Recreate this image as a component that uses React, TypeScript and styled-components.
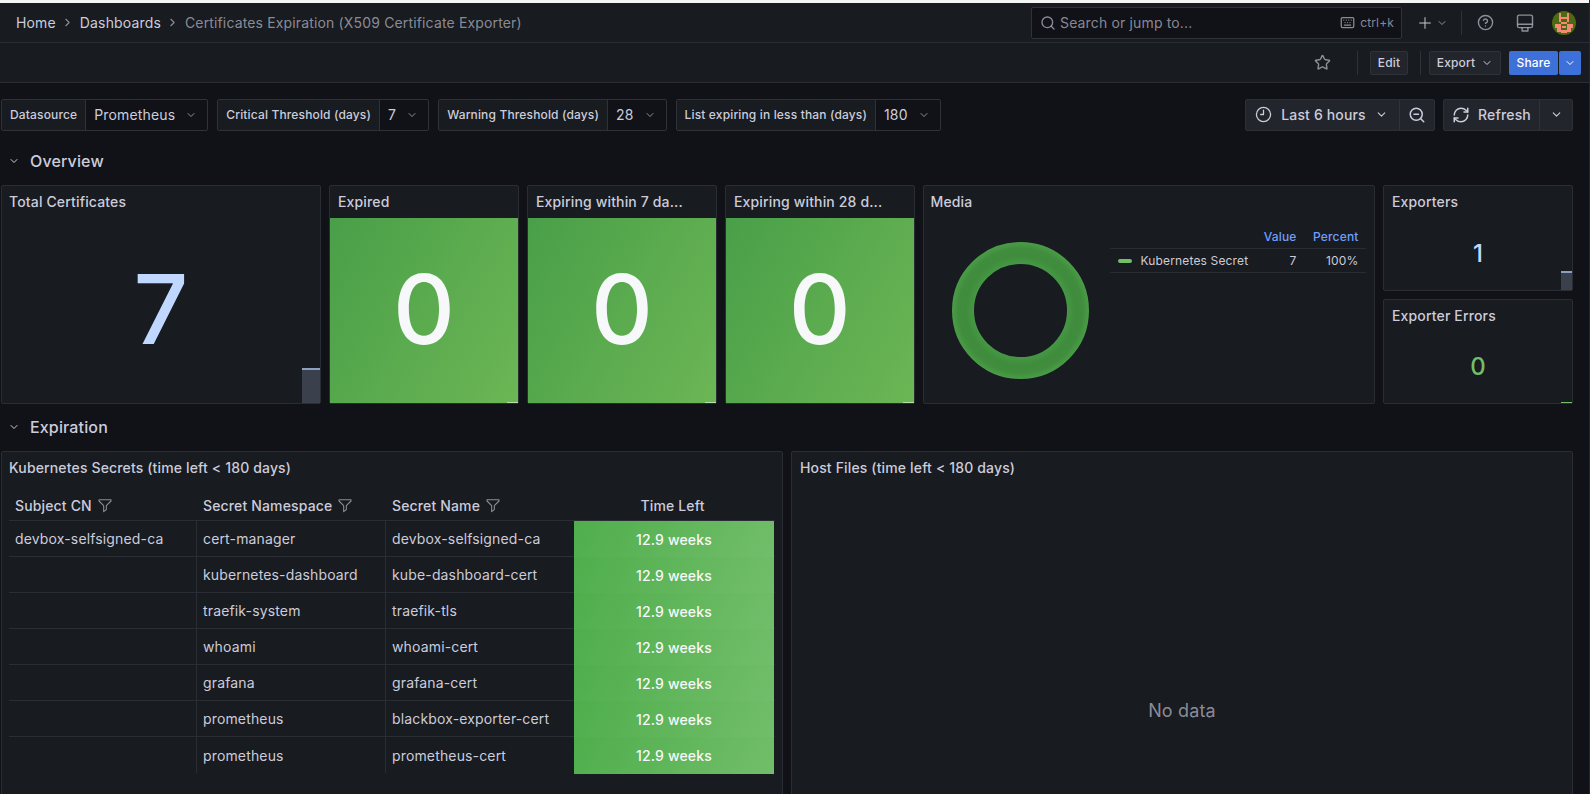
import React from 'react';
import styled, { createGlobalStyle } from 'styled-components';
import { ChevronDown, ChevronRight, CircleHelp, Keyboard, Plus, RefreshCw, Search, Star, ZoomOut } from 'lucide-react';

const GlobalStyle = createGlobalStyle`
  html, body {
    margin: 0;
    padding: 0;
    background: #111217;
  }
  * {
    box-sizing: border-box;
  }
`;

// Page frame
const Page = styled.div`
  width: 1590px;
  height: 794px;
  overflow: hidden;
  background: #111217;
  color: #ccccdc;
  font-family: Inter, 'Noto Sans', sans-serif;
  font-size: 14px;
  letter-spacing: 0.01071em;
  border-right: 1px solid #24262b;
`;

const WindowEdge = styled.div`
  height: 3px;
  background: #f4f5f5;
`;

// Top bar
const TopBar = styled.header`
  display: flex;
  align-items: center;
  height: 40px;
  padding: 0 13px 0 16px;
  background: #181b1f;
  border-bottom: 1px solid #2a2d33;
`;

const Breadcrumbs = styled.nav`
  display: flex;
  flex: 1;
  align-items: center;
`;

const Crumb = styled.span<{ $current?: boolean }>`
  color: ${(p) => (p.$current ? 'rgba(204, 204, 220, 0.65)' : '#ccccdc')};
`;

const CrumbSeparator = styled.span`
  display: flex;
  width: 24px;
  justify-content: center;
  color: rgba(204, 204, 220, 0.65);
`;

const SearchBox = styled.div`
  display: flex;
  align-items: center;
  width: 371px;
  height: 32px;
  padding: 0 7px 0 8px;
  background: #111217;
  border: 1px solid #2f3238;
  border-radius: 2px;
  color: rgba(204, 204, 220, 0.65);
`;

const SearchText = styled.span`
  flex: 1;
  margin-left: 4px;
`;

const ShortcutText = styled.span`
  margin-left: 5px;
  font-size: 12px;
`;

const AddMenu = styled.div`
  display: flex;
  align-items: center;
  gap: 2px;
  margin-left: 14px;
  color: rgba(204, 204, 220, 0.65);
`;

const BarDivider = styled.span<{ $left: number; $right: number }>`
  width: 1px;
  height: 24px;
  margin: 0 ${(p) => p.$right}px 0 ${(p) => p.$left}px;
  background: #2f3238;
`;

const BarIcon = styled.span<{ $gap: number }>`
  display: flex;
  margin-right: ${(p) => p.$gap}px;
  color: rgba(204, 204, 220, 0.65);
`;

const Avatar = styled.svg`
  display: block;
  width: 24px;
  height: 24px;
`;

// Dashboard toolbar
const Toolbar = styled.div`
  display: flex;
  align-items: center;
  justify-content: flex-end;
  height: 40px;
  padding-right: 8px;
  background: #181b1f;
  border-bottom: 1px solid #2a2d33;
`;

const ToolbarButton = styled.button<{ $width: number }>`
  display: flex;
  align-items: center;
  justify-content: center;
  gap: 6px;
  width: ${(p) => p.$width}px;
  height: 24px;
  padding: 0;
  background: #22252b;
  border: 1px solid #2f3238;
  border-radius: 2px;
  color: #ccccdc;
  font: inherit;
  font-size: 12px;
  font-weight: 500;
  letter-spacing: inherit;
`;

const ShareButton = styled.button<{ $width: number }>`
  display: flex;
  align-items: center;
  justify-content: center;
  width: ${(p) => p.$width}px;
  height: 24px;
  margin-left: ${(p) => (p.$width > 30 ? 8 : 1)}px;
  padding: 0;
  background: #3d71d9;
  border: none;
  border-radius: 2px;
  color: #fff;
  font: inherit;
  font-size: 12px;
  font-weight: 500;
  letter-spacing: inherit;
`;

// Variables row
const ControlsRow = styled.div`
  display: flex;
  justify-content: space-between;
  margin: 16px 16px 16px 1px;
`;

const VariableGroup = styled.div`
  display: flex;
  gap: 9px;
`;

const Variable = styled.div`
  display: flex;
  height: 32px;
  border: 1px solid #2f3238;
  border-radius: 2px;
`;

const VariableLabel = styled.label`
  display: flex;
  align-items: center;
  padding: 0 8px 1px;
  background: #181b1f;
  border-right: 1px solid #2f3238;
  font-size: 12px;
  font-weight: 500;
`;

const VariableValue = styled.div`
  display: flex;
  align-items: center;
  gap: 10px;
  padding: 0 10px 1px 8px;
  color: #ccccdc;
`;

const MutedChevron = styled.span`
  display: flex;
  color: rgba(204, 204, 220, 0.65);
`;

const TimeControls = styled.div`
  display: flex;
  gap: 8px;
`;

const ButtonGroup = styled.div`
  display: flex;
  height: 32px;
  background: #22252b;
  border: 1px solid #2c2f35;
  border-radius: 2px;
`;

const GroupItem = styled.div<{ $width: number; $gap?: number; $endPad?: number }>`
  display: flex;
  align-items: center;
  justify-content: center;
  gap: ${(p) => p.$gap ?? 8}px;
  width: ${(p) => p.$width}px;
  padding: 0 ${(p) => p.$endPad ?? 0}px 1px 0;
  font-weight: 500;
  & + & {
    border-left: 1px solid #2f3238;
  }
`;

// Rows and panels
const SectionHeader = styled.h2`
  display: flex;
  align-items: center;
  gap: 10px;
  height: 28px;
  margin: 0 0 10px;
  padding-left: 8px;
  font-size: 16px;
  font-weight: 500;
  letter-spacing: inherit;
`;

const OverviewGrid = styled.section`
  display: grid;
  grid-template-columns: 320px 190px 190px 189.5px 452.5px 190px;
  grid-template-rows: 105.5px 105.5px;
  gap: 8px;
  margin: 0 0 9px 1px;
`;

const ExpirationGrid = styled.section`
  display: grid;
  grid-template-columns: 782px 782px;
  gap: 8px;
  height: 486px;
  margin-left: 1px;
`;

const Panel = styled.article<{ $tall?: boolean }>`
  display: flex;
  flex-direction: column;
  grid-row: ${(p) => (p.$tall ? 'span 2' : 'auto')};
  min-width: 0;
  background: #181b1f;
  border: 1px solid #2a2d33;
  border-radius: 2px;
`;

const PanelTitle = styled.h3<{ $tight?: boolean }>`
  flex: none;
  height: 32px;
  margin: 0;
  padding: 0 ${(p) => (p.$tight ? 7 : 8)}px;
  overflow: hidden;
  font-size: 14px;
  font-weight: 500;
  letter-spacing: inherit;
  line-height: 32px;
  white-space: nowrap;
`;

const StatBody = styled.div<{ $filled?: boolean }>`
  position: relative;
  display: flex;
  flex: 1;
  align-items: center;
  justify-content: center;
  background: ${(p) => (p.$filled ? 'linear-gradient(120deg, #499f48, #6cb655)' : 'transparent')};
`;

const StatValue = styled.span<{ $size: number; $color: string }>`
  margin-bottom: ${(p) => (p.$size > 50 ? 4 : 0)}px;
  color: ${(p) => p.$color};
  font-size: ${(p) => p.$size}px;
  font-weight: 500;
  letter-spacing: 0;
  line-height: 1;
`;

const Spark = styled.span<{ $width: number; $height: number; $tone: 'blue' | 'green' | 'light' }>`
  position: absolute;
  right: 0;
  bottom: 0;
  width: ${(p) => p.$width}px;
  height: ${(p) => p.$height}px;
  background: ${(p) =>
    p.$tone === 'blue' ? '#3b414c' : p.$tone === 'green' ? '#73bf69' : '#b5dfae'};
  border-top: ${(p) => (p.$tone === 'blue' ? '2px solid #8c9fc0' : 'none')};
`;

const MediaBody = styled.div`
  display: flex;
  flex: 1;
  align-items: center;
`;

const Donut = styled.svg`
  flex: none;
  width: 137px;
  height: 137px;
  margin-left: 28px;
`;

const Legend = styled.div`
  align-self: flex-start;
  width: 256px;
  margin-left: 21px;
  font-size: 12px;
`;

const LegendRow = styled.div<{ $head?: boolean }>`
  display: grid;
  grid-template-columns: minmax(0, 1fr) 60px 62px;
  align-items: center;
  height: ${(p) => (p.$head ? 31 : 24)}px;
  padding: ${(p) => (p.$head ? '6px 7px 0 8px' : '0 7px 0 8px')};
  border-bottom: 1px solid #2a2d33;
  color: ${(p) => (p.$head ? '#6e9fff' : '#ccccdc')};
  font-weight: ${(p) => (p.$head ? 500 : 400)};
`;

const LegendName = styled.span`
  display: flex;
  align-items: center;
  gap: 9px;
  white-space: nowrap;
`;

const LegendMarker = styled.i`
  flex: none;
  width: 14px;
  height: 4px;
  background: #73bf69;
  border-radius: 2px;
`;

const RightCell = styled.span`
  text-align: right;
`;

// Table
const Table = styled.div`
  margin: 6px 7px 0;
`;

const TableRow = styled.div<{ $head?: boolean; $last?: boolean }>`
  display: grid;
  grid-template-columns: 188px 189px 188px 200px;
  height: ${(p) => (p.$head ? 31 : 36)}px;
  border-bottom: ${(p) => (p.$last ? 'none' : '1px solid #2a2d33')};
`;

const HeadCell = styled.div<{ $center?: boolean }>`
  display: flex;
  align-items: center;
  justify-content: ${(p) => (p.$center ? 'center' : 'flex-start')};
  gap: 5px;
  padding: ${(p) => (p.$center ? '0 9px 0 6px' : '0 6px')};
  font-weight: 500;
`;

const Cell = styled.div<{ $divider?: boolean }>`
  display: flex;
  align-items: center;
  padding: 0 6px;
  border-right: ${(p) => (p.$divider ? '1px solid #2a2d33' : 'none')};
`;

const ValueCell = styled.div`
  display: flex;
  align-items: center;
  justify-content: center;
  margin-bottom: -1px;
  background: linear-gradient(120deg, #4fae4c, #72be6a);
  color: #f7f8fa;
  font-weight: 500;
`;

const FilterIcon = styled.svg`
  width: 16px;
  height: 16px;
  color: rgba(204, 204, 220, 0.65);
`;

const NoData = styled.div`
  display: flex;
  flex: 1;
  align-items: center;
  justify-content: center;
  color: rgba(204, 204, 220, 0.65);
  font-size: 18px;
`;

const statusPanels = ['Expired', 'Expiring within 7 da...', 'Expiring within 28 d...'];

const secrets = [
  { cn: 'devbox-selfsigned-ca', namespace: 'cert-manager', name: 'devbox-selfsigned-ca' },
  { cn: '', namespace: 'kubernetes-dashboard', name: 'kube-dashboard-cert' },
  { cn: '', namespace: 'traefik-system', name: 'traefik-tls' },
  { cn: '', namespace: 'whoami', name: 'whoami-cert' },
  { cn: '', namespace: 'grafana', name: 'grafana-cert' },
  { cn: '', namespace: 'prometheus', name: 'blackbox-exporter-cert' },
  { cn: '', namespace: 'prometheus', name: 'prometheus-cert' },
];

const variables = [
  { label: 'Datasource', value: 'Prometheus' },
  { label: 'Critical Threshold (days)', value: '7' },
  { label: 'Warning Threshold (days)', value: '28' },
  { label: 'List expiring in less than (days)', value: '180' },
];

const Funnel = () => (
  <FilterIcon viewBox="0 0 24 24" fill="none" stroke="currentColor" strokeWidth="1.6" strokeLinejoin="round">
    <path d="M3 4h18v2l-7 7v6l-4 3v-9L3 6z" />
  </FilterIcon>
);

const MonitorIcon = () => (
  <svg width="20" height="20" viewBox="0 0 24 24" fill="none" stroke="currentColor" strokeWidth="1.7" strokeLinejoin="round">
    <rect x="3" y="2.5" width="18" height="15" rx="2" />
    <path d="M3 13.5h18M8.5 17.5v4h7v-4" />
  </svg>
);

const ClockNine = () => (
  <svg width="17" height="17" viewBox="0 0 24 24" fill="none" stroke="currentColor" strokeWidth="1.8" strokeLinecap="round" strokeLinejoin="round">
    <circle cx="12" cy="12" r="10" />
    <path d="M12 6v6H8" />
  </svg>
);

const IdentIcon = () => (
  <Avatar viewBox="0 0 24 24">
    <circle cx="12" cy="12" r="12" fill="#4d6a12" />
    <g fill="#f58a76">
      <rect x="7" y="2" width="2" height="9" />
      <rect x="15" y="2" width="2" height="9" />
      <rect x="7" y="6" width="10" height="2" />
      <rect x="9" y="11" width="6" height="2" />
      <rect x="3" y="13" width="6" height="4" />
      <rect x="15" y="13" width="6" height="4" />
      <rect x="10" y="15" width="4" height="2" />
      <rect x="5" y="17" width="4" height="4" />
      <rect x="15" y="17" width="4" height="4" />
      <rect x="9" y="19" width="6" height="3" />
    </g>
  </Avatar>
);

const App = () => (
  <Page>
    <GlobalStyle />
    <WindowEdge />
    <TopBar>
      <Breadcrumbs>
        <Crumb>Home</Crumb>
        <CrumbSeparator>
          <ChevronRight size={13} />
        </CrumbSeparator>
        <Crumb>Dashboards</Crumb>
        <CrumbSeparator>
          <ChevronRight size={13} />
        </CrumbSeparator>
        <Crumb $current>Certificates Expiration (X509 Certificate Exporter)</Crumb>
      </Breadcrumbs>
      <SearchBox>
        <Search size={16} />
        <SearchText>Search or jump to...</SearchText>
        <Keyboard size={15} />
        <ShortcutText>ctrl+k</ShortcutText>
      </SearchBox>
      <AddMenu>
        <Plus size={18} />
        <ChevronDown size={12} />
      </AddMenu>
      <BarDivider $left={13} $right={15} />
      <BarIcon $gap={21}>
        <CircleHelp size={17} />
      </BarIcon>
      <BarIcon $gap={17}>
        <MonitorIcon />
      </BarIcon>
      <IdentIcon />
    </TopBar>

    <Toolbar>
      <MutedChevron>
        <Star size={17} />
      </MutedChevron>
      <BarDivider $left={26} $right={12} />
      <ToolbarButton $width={38}>Edit</ToolbarButton>
      <BarDivider $left={12} $right={8} />
      <ToolbarButton $width={72}>
        Export
        <ChevronDown size={12} />
      </ToolbarButton>
      <ShareButton $width={49}>Share</ShareButton>
      <ShareButton $width={22}>
        <ChevronDown size={12} />
      </ShareButton>
    </Toolbar>

    <ControlsRow>
      <VariableGroup>
        {variables.map((item) => (
          <Variable key={item.label}>
            <VariableLabel>{item.label}</VariableLabel>
            <VariableValue>
              {item.value}
              <MutedChevron>
                <ChevronDown size={12} />
              </MutedChevron>
            </VariableValue>
          </Variable>
        ))}
      </VariableGroup>
      <TimeControls>
        <ButtonGroup>
          <GroupItem $width={153} $gap={9} $endPad={2}>
            <ClockNine />
            Last 6 hours
            <ChevronDown size={13} />
          </GroupItem>
          <GroupItem $width={35}>
            <ZoomOut size={18} />
          </GroupItem>
        </ButtonGroup>
        <ButtonGroup>
          <GroupItem $width={95}>
            <RefreshCw size={18} />
            Refresh
          </GroupItem>
          <GroupItem $width={33}>
            <ChevronDown size={13} />
          </GroupItem>
        </ButtonGroup>
      </TimeControls>
    </ControlsRow>

    <SectionHeader>
      <ChevronDown size={12} />
      Overview
    </SectionHeader>
    <OverviewGrid>
      <Panel $tall>
        <PanelTitle $tight>Total Certificates</PanelTitle>
        <StatBody>
          <StatValue $size={96} $color="#c0d8ff">7</StatValue>
          <Spark $width={18} $height={35} $tone="blue" />
        </StatBody>
      </Panel>
      {statusPanels.map((title) => (
        <Panel $tall key={title}>
          <PanelTitle>{title}</PanelTitle>
          <StatBody $filled>
            <StatValue $size={96} $color="#f7f8fa">0</StatValue>
            <Spark $width={11} $height={1} $tone="light" />
          </StatBody>
        </Panel>
      ))}
      <Panel $tall>
        <PanelTitle $tight>Media</PanelTitle>
        <MediaBody>
          <Donut viewBox="0 0 137 137">
            <defs>
              <radialGradient id="ring" gradientUnits="userSpaceOnUse" cx="68.5" cy="68.5" r="68.5">
                <stop offset="0.68" stopColor="#469845" />
                <stop offset="0.8" stopColor="#3f8c3c" />
                <stop offset="0.9" stopColor="#408d3d" />
                <stop offset="1" stopColor="#4a9c47" />
              </radialGradient>
            </defs>
            <circle cx="68.5" cy="68.5" r="57.5" fill="none" stroke="url(#ring)" strokeWidth="22" />
          </Donut>
          <Legend>
            <LegendRow $head>
              <span />
              <RightCell>Value</RightCell>
              <RightCell>Percent</RightCell>
            </LegendRow>
            <LegendRow>
              <LegendName>
                <LegendMarker />
                Kubernetes Secret
              </LegendName>
              <RightCell>7</RightCell>
              <RightCell>100%</RightCell>
            </LegendRow>
          </Legend>
        </MediaBody>
      </Panel>
      <Panel>
        <PanelTitle>Exporters</PanelTitle>
        <StatBody>
          <StatValue $size={24} $color="#c0d8ff">1</StatValue>
          <Spark $width={11} $height={19} $tone="blue" />
        </StatBody>
      </Panel>
      <Panel>
        <PanelTitle>Exporter Errors</PanelTitle>
        <StatBody>
          <StatValue $size={24} $color="#73bf69">0</StatValue>
          <Spark $width={11} $height={1} $tone="green" />
        </StatBody>
      </Panel>
    </OverviewGrid>

    <SectionHeader>
      <ChevronDown size={12} />
      Expiration
    </SectionHeader>
    <ExpirationGrid>
      <Panel>
        <PanelTitle $tight>Kubernetes Secrets (time left &lt; 180 days)</PanelTitle>
        <Table>
          <TableRow $head>
            <HeadCell>
              Subject CN
              <Funnel />
            </HeadCell>
            <HeadCell>
              Secret Namespace
              <Funnel />
            </HeadCell>
            <HeadCell>
              Secret Name
              <Funnel />
            </HeadCell>
            <HeadCell $center>Time Left</HeadCell>
          </TableRow>
          {secrets.map((row, index) => (
            <TableRow key={row.name} $last={index === secrets.length - 1}>
              <Cell $divider>{row.cn}</Cell>
              <Cell $divider>{row.namespace}</Cell>
              <Cell>{row.name}</Cell>
              <ValueCell>12.9 weeks</ValueCell>
            </TableRow>
          ))}
        </Table>
      </Panel>
      <Panel>
        <PanelTitle>Host Files (time left &lt; 180 days)</PanelTitle>
        <NoData>No data</NoData>
      </Panel>
    </ExpirationGrid>
  </Page>
);

export default App;
